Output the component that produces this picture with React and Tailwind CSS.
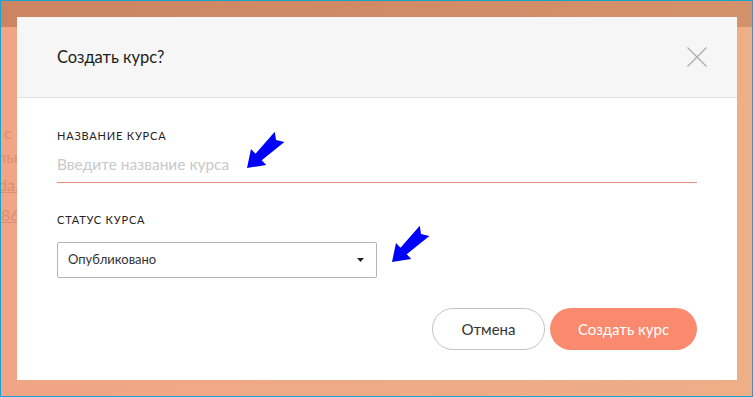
import React from 'react';

const font = { fontFamily: 'Lato, "Noto Sans", sans-serif' };

function Arrow() {
  return (
    <polygon points="247,168 266.2,165 261.7,160.3 284.4,142 276,140 274.8,131.8 255.5,153.7 251,149" />
  );
}

export default function App() {
  return (
    <div
      className="relative w-[753px] h-[397px] border border-[#17a2d0] overflow-hidden bg-gradient-to-r from-[#f0a586] to-[#eeae86]"
      style={font}
    >
      {/* page behind the overlay, only its left edge shows */}
      <div className="h-[26px] bg-gradient-to-r from-[#cc8462] to-[#d4926a]" />
      <div className="w-[16px] overflow-hidden whitespace-nowrap pt-[94px] text-[16px] leading-[24px] text-[#dc8e72]">
        <div className="pl-[3px]">с к</div>
        <div className="ml-[-4px]">льк</div>
        <div className="ml-[-3px] mt-[4px] underline">da.</div>
        <div className="mt-[6px] underline">86</div>
      </div>

      {/* modal */}
      <div className="absolute left-[16px] top-[16px] w-[720px] h-[363px] bg-white flex flex-col">
        <div className="h-[81px] bg-[#f6f6f6] border-b border-[#e2e2e2] flex items-center justify-between pl-[40px] pr-[30px]">
          <h2 className="text-[16.5px] text-[#1c1c1c]">Создать курс?</h2>
          <svg width="20" height="20" viewBox="0 0 20 20" className="mb-[1px]">
            <path d="M0.5 0.5 L19.5 19.5 M19.5 0.5 L0.5 19.5" stroke="#ababab" strokeWidth="1.2" fill="none" />
          </svg>
        </div>

        <div className="flex-1 px-[40px] pt-[30px] pb-[30px] flex flex-col">
          <label className="block text-[11px] leading-[16px] tracking-[0.8px] text-[#222]">НАЗВАНИЕ КУРСА</label>
          <input
            className="mt-[8px] w-full h-[31px] pb-[7px] pt-0 px-0 text-[15.5px] leading-[24px] border-b border-[#e8907a] outline-none placeholder:text-[#c9c9c9]"
            placeholder="Введите название курса"
            style={font}
          />

          <label className="block mt-[29px] text-[11px] leading-[16px] tracking-[0.8px] text-[#222]">СТАТУС КУРСА</label>
          <div className="mt-[14px] w-[320px] h-[36px] border border-[#b5b5b5] rounded-[2px] flex items-center justify-between pl-[10px] pr-[12px]">
            <span className="text-[13px] text-[#333]">Опубликовано</span>
            <svg width="7" height="4" viewBox="0 0 7 4">
              <path d="M0 0 H7 L3.5 4 Z" fill="#222" />
            </svg>
          </div>

          <div className="mt-auto flex justify-end gap-[5px]">
            <button className="w-[113px] h-[42px] rounded-full border border-[#c4c4c4] bg-white text-[15px] text-[#333]" style={font}>
              Отмена
            </button>
            <button className="w-[147px] h-[42px] rounded-full bg-[#f98a6e] text-[15px] text-white" style={font}>
              Создать курс
            </button>
          </div>
        </div>
      </div>

      {/* annotation arrows */}
      <svg className="absolute left-[-1px] top-[-1px] pointer-events-none" width="753" height="397" viewBox="0 0 753 397">
        <g fill="#0000ff">
          <Arrow />
          <g transform="translate(145 94)">
            <Arrow />
          </g>
        </g>
      </svg>
    </div>
  );
}
